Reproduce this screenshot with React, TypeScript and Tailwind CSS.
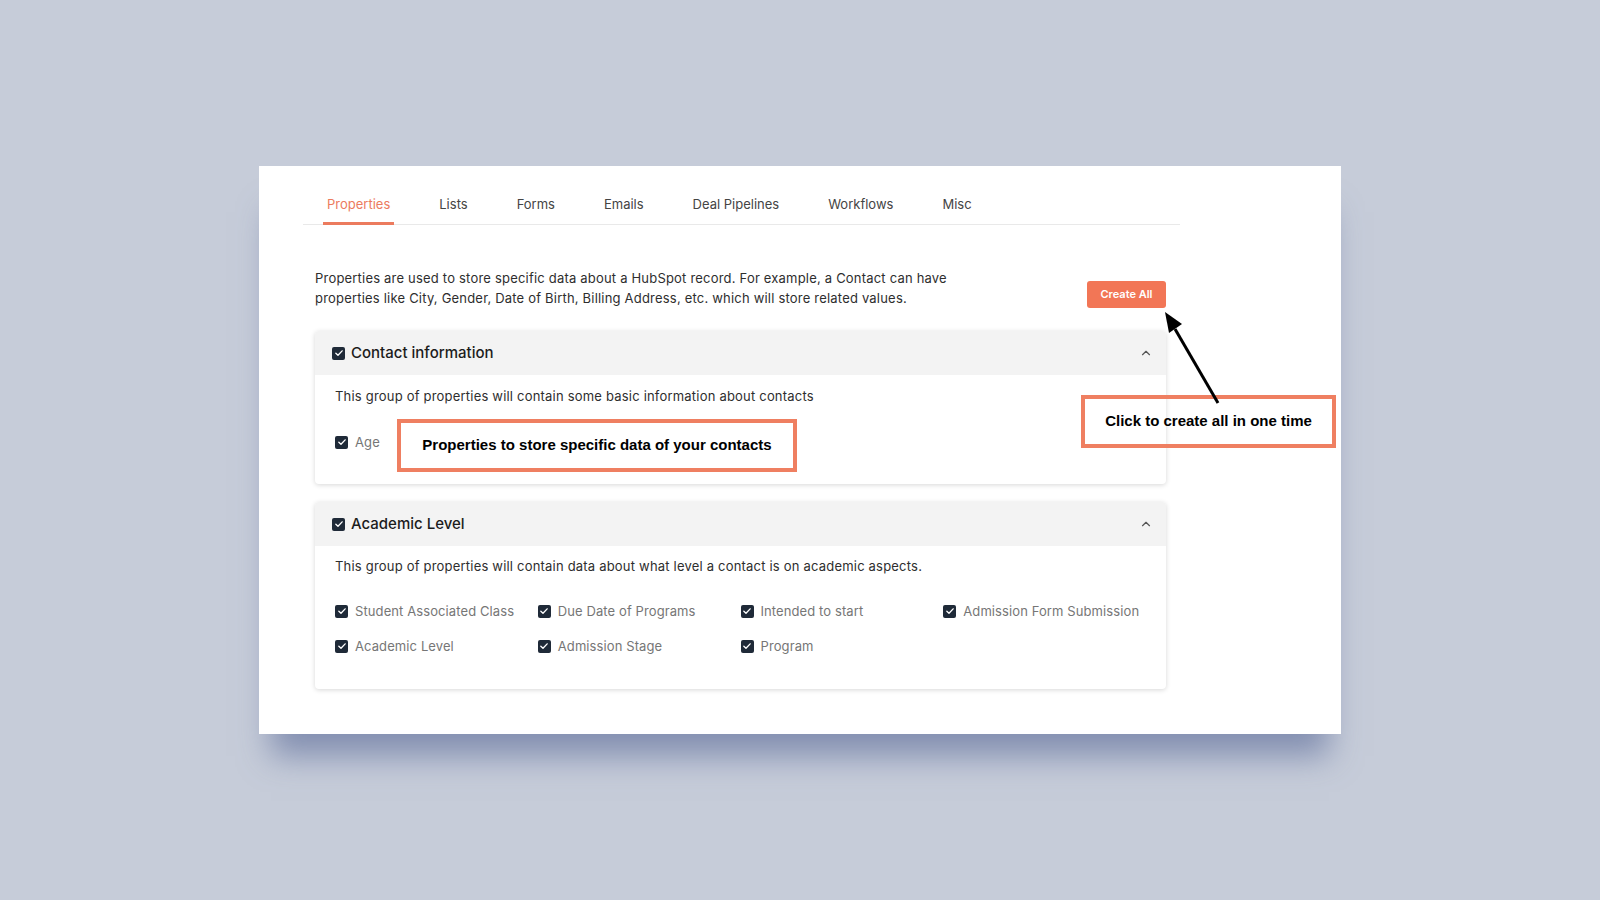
import { ChevronUp } from 'lucide-react';

const tabs = ['Properties', 'Lists', 'Forms', 'Emails', 'Deal Pipelines', 'Workflows', 'Misc'];

const academic = [
  'Student Associated Class',
  'Due Date of Programs',
  'Intended to start',
  'Admission Form Submission',
  'Academic Level',
  'Admission Stage',
  'Program',
];

const Check = ({ size = 13 }: { size?: number }) => (
  <span
    className="flex shrink-0 items-center justify-center rounded-[2px] bg-[#1f2a38]"
    style={{ width: size, height: size }}
  >
    <svg viewBox="0 0 12 12" width={size - 3} height={size - 3} fill="none">
      <path d="M2.2 6.2 4.8 8.7 9.8 3.4" stroke="#fff" strokeWidth="1.6" strokeLinecap="round" strokeLinejoin="round" />
    </svg>
  </span>
);

const Item = ({ label }: { label: string }) => (
  <div className="flex items-center gap-[7px]">
    <Check />
    <span className="text-[13px] leading-5 tracking-[0.1px] text-[#767676]">{label}</span>
  </div>
);

const GroupHeader = ({ title }: { title: string }) => (
  <div className="flex h-[44px] items-center justify-between rounded-t-[4px] bg-[#f3f3f3] pl-[17px] pr-[13px]">
    <div className="flex items-center gap-[6px]">
      <Check size={13} />
      <span className="text-[15px] font-medium text-[#1c1c1c]">{title}</span>
    </div>
    <ChevronUp size={14} strokeWidth={2} className="text-[#555]" />
  </div>
);

export default function App() {
  return (
    <div
      className="min-h-screen bg-[#c6ccd9] pt-[166px] text-[#333]"
      style={{ fontFamily: 'Inter, "Noto Sans", sans-serif' }}
    >
      <div className="relative mx-auto h-[568px] w-[1082px] bg-white px-[44px] pt-[18px] shadow-[0_34px_30px_-12px_rgba(95,110,155,0.65)]">
        {/* Tabs */}
        <div className="flex w-[877px] gap-[41px] border-b border-[#e9e9e9] pl-[20px]">
          {tabs.map((t, i) => (
            <div
              key={t}
              className={
                i === 0
                  ? '-mb-px border-b-[3px] border-[#ec7b5e] px-[4px] pt-[10px] pb-[7px] text-[13px] leading-5 text-[#ec7b5e]'
                  : 'px-[4px] pt-[10px] pb-[10px] text-[13px] leading-5 text-[#444]'
              }
            >
              {t}
            </div>
          ))}
        </div>

        <div className="w-[863px] pl-[12px]">
          {/* Intro */}
          <div className="mt-[44px] flex items-start justify-between">
            <p className="text-[13px] leading-[19.5px] tracking-[0.2px] text-[#2e2e2e]">
              Properties are used to store specific data about a HubSpot record. For example, a Contact can have
              <br />
              properties like City, Gender, Date of Birth, Billing Address, etc. which will store related values.
            </p>
            <button className="mt-[12px] h-[27px] w-[79px] rounded-[3px] bg-[#f27656] text-[11px] font-semibold text-white">
              Create All
            </button>
          </div>

          {/* Contact information */}
          <div className="mt-[23px] rounded-[4px] bg-white shadow-[0_1px_5px_rgba(0,0,0,0.16)]">
            <GroupHeader title="Contact information" />
            <div className="px-[20px] pt-[11px] pb-[32px]">
              <p className="text-[13px] leading-5 tracking-[0.2px] text-[#2e2e2e]">
                This group of properties will contain some basic information about contacts
              </p>
              <div className="mt-[26px]">
                <Item label="Age" />
              </div>
            </div>
          </div>

          {/* Academic Level */}
          <div className="mt-[18px] rounded-[4px] bg-white shadow-[0_1px_5px_rgba(0,0,0,0.16)]">
            <GroupHeader title="Academic Level" />
            <div className="px-[20px] pt-[10px] pb-[33px]">
              <p className="text-[13px] leading-5 tracking-[0.2px] text-[#2e2e2e]">
                This group of properties will contain data about what level a contact is on academic aspects.
              </p>
              <div className="mt-[25px] grid grid-cols-4 gap-y-[15px]">
                {academic.map((a) => (
                  <Item key={a} label={a} />
                ))}
              </div>
            </div>
          </div>
        </div>

        {/* Annotations */}
        <div
          className="absolute left-[138px] top-[253px] flex h-[53px] w-[400px] items-center justify-center border-[4px] border-[#ef7f61] text-[15px] font-bold text-black"
          style={{ fontFamily: '"Liberation Sans", Arial, sans-serif' }}
        >
          Properties to store specific data of your contacts
        </div>
        <div
          className="absolute left-[822px] top-[229px] flex h-[53px] w-[255px] items-center justify-center border-[4px] border-[#ef7f61] text-[15px] font-bold text-black"
          style={{ fontFamily: '"Liberation Sans", Arial, sans-serif' }}
        >
          Click to create all in one time
        </div>
        <svg className="pointer-events-none absolute left-0 top-0" width="1082" height="568">
          <line x1="959" y1="237" x2="916" y2="163" stroke="#000" strokeWidth="3" />
          <polygon points="906,146 923,158 910,167" fill="#000" />
        </svg>
      </div>
    </div>
  );
}
